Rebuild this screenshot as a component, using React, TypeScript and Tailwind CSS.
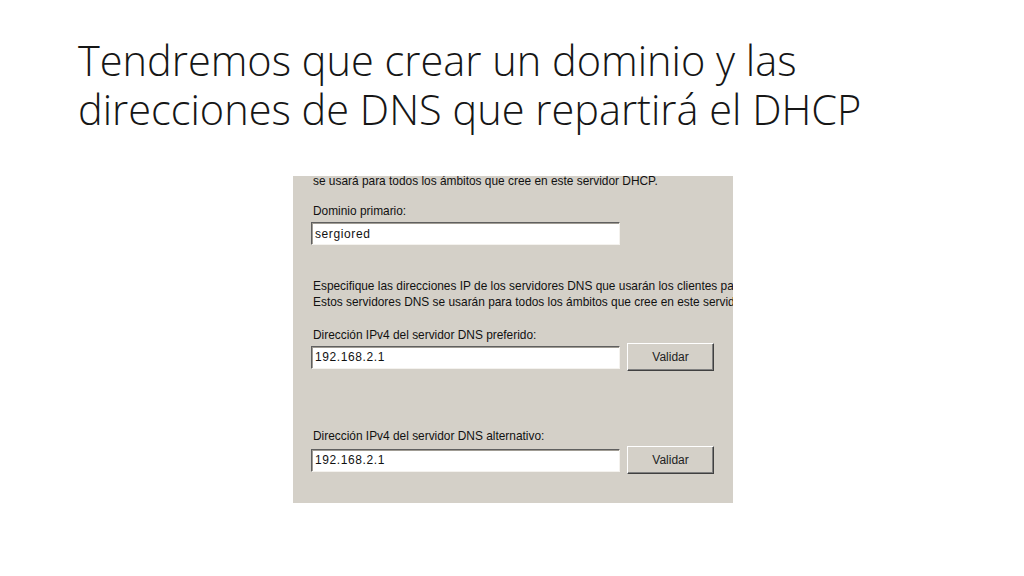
export default function App() {
    // Windows classic field + button borders
    const field = "h-[23px] w-[309px] bg-white border border-t-[#5f5f5f] border-l-[#5f5f5f] border-b-[#f4f2ee] border-r-[#f4f2ee] shadow-[inset_1px_1px_0_#a09c94] flex items-center pl-[3px] text-[12px] text-[#111] tracking-[0.6px]";
    const button = "h-[28px] w-[87px] ml-[7px] bg-[#d4d0c8] border border-t-white border-l-white border-b-[#404040] border-r-[#404040] shadow-[inset_-1px_-1px_0_#808080] flex items-center justify-center text-[12px] text-[#222]";

    return (
        <div className="w-[1024px] h-[576px] bg-white overflow-hidden flex flex-col">
            <h1 className="pl-[78px] pt-[36px] text-[41.5px] leading-[49px] text-[#161616] font-light" style={{ fontFamily: "'Open Sans', Lato, sans-serif" }}>
                Tendremos que crear un dominio y las
                <br />
                direcciones de DNS que repartirá el DHCP
            </h1>

            <div
                className="ml-[293px] mt-[42px] w-[440px] h-[327px] bg-[#d4d0c8] overflow-hidden flex flex-col pl-[18px] text-[11.9px] text-[#111]"
                style={{ fontFamily: "'Liberation Sans', Arial, sans-serif" }}>
                <p className="pl-[2px] -mt-[2px] leading-[15px] whitespace-nowrap">
                    se usará para todos los ámbitos que cree en este servidor DHCP.
                </p>

                <p className="pl-[2px] mt-[15px] leading-[15px]">Dominio primario:</p>
                <div className="mt-[3px] flex">
                    <div className={field}>sergiored</div>
                </div>

                <div className="pl-[2px] mt-[33px] leading-[16px] whitespace-nowrap">
                    <p>Especifique las direcciones IP de los servidores DNS que usarán los clientes para</p>
                    <p>Estos servidores DNS se usarán para todos los ámbitos que cree en este servidor DHCP.</p>
                </div>

                <p className="pl-[2px] mt-[18px] leading-[15px]">Dirección IPv4 del servidor DNS preferido:</p>
                <div className="mt-0 flex items-center">
                    <div className={field}>192.168.2.1</div>
                    <div className={button}>Validar</div>
                </div>

                <p className="pl-[2px] mt-[58px] leading-[15px]">Dirección IPv4 del servidor DNS alternativo:</p>
                <div className="mt-[2px] flex items-center">
                    <div className={field}>192.168.2.1</div>
                    <div className={button}>Validar</div>
                </div>
            </div>
        </div>
    );
}
